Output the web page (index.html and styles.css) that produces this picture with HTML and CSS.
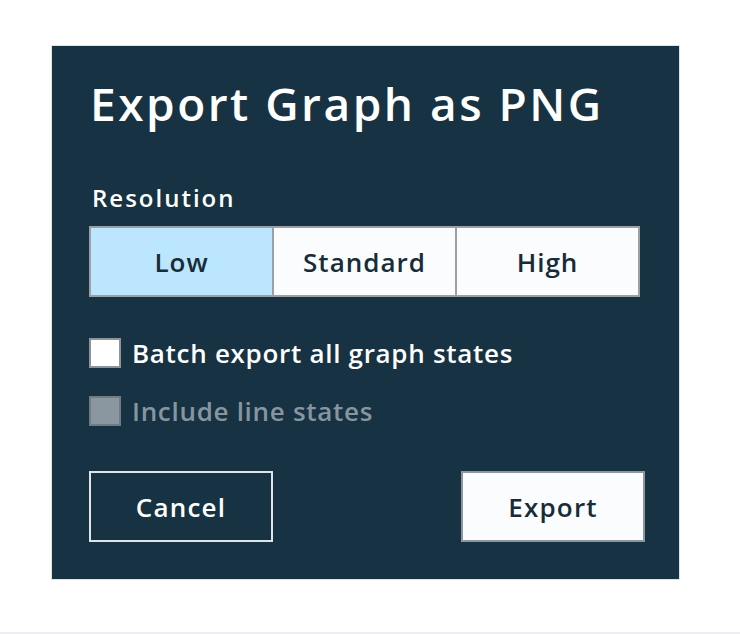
FILE: index.html
```html
<!DOCTYPE html>
<html lang="en">
<head>
<meta charset="utf-8">
<title>Export Graph as PNG</title>
<link rel="stylesheet" href="styles.css">
</head>
<body>
<div class="page">
  <div class="dialog">
    <h1 class="title">Export Graph as PNG</h1>
    <div class="label">Resolution</div>
    <div class="segmented">
      <button class="seg seg-active">Low</button>
      <button class="seg">Standard</button>
      <button class="seg">High</button>
    </div>
    <label class="check">
      <span class="box"></span>
      <span class="check-text">Batch export all graph states</span>
    </label>
    <label class="check check-disabled">
      <span class="box"></span>
      <span class="check-text">Include line states</span>
    </label>
    <div class="actions">
      <button class="btn btn-cancel">Cancel</button>
      <button class="btn btn-export">Export</button>
    </div>
  </div>
  <div class="footer-line"></div>
</div>
</body>
</html>
```
FILE: styles.css
```css
html, body {
  margin: 0;
  padding: 0;
  background: #ffffff;
}
body {
  font-family: "Open Sans", "Noto Sans", sans-serif;
  font-weight: 600;
}
.page {
  padding-top: 45px;
}
.dialog {
  box-sizing: border-box;
  margin-left: 51px;
  width: 629px;
  height: 535px;
  background: #173242;
  border: 1px solid #dde3e8;
  padding: 29px 0 0 37px;
  display: flex;
  flex-direction: column;
  align-items: flex-start;
}
.title {
  margin: 0;
  font-size: 46px;
  line-height: 56px;
  font-weight: 600;
  color: #ffffff;
  padding-left: 1px;
  letter-spacing: 2.5px;
}
.label {
  margin-top: 52px;
  font-size: 24px;
  line-height: 30px;
  color: #ffffff;
  padding-left: 3px;
  letter-spacing: 2px;
}
.segmented {
  margin-top: 13px;
  display: flex;
  width: 551px;
  height: 71px;
  box-sizing: border-box;
  border: 2px solid #9aa0a5;
  background: #9aa0a5;
  gap: 2px;
}
.seg {
  flex: 1;
  border: 0;
  margin: 0;
  padding: 0;
  background: #fbfcfe;
  font-family: inherit;
  font-weight: 600;
  font-size: 26px;
  letter-spacing: 1px;
  color: #172c39;
}
.seg-active {
  background: #bce6fd;
}
.check {
  display: flex;
  align-items: center;
  gap: 11px;
  font-size: 26px;
  line-height: 30px;
  letter-spacing: 0.7px;
  color: #ffffff;
}
.segmented + .check {
  margin-top: 41px;
}
.check + .check {
  margin-top: 28px;
}
.box {
  display: block;
  box-sizing: border-box;
  width: 32px;
  height: 30px;
  background: #ffffff;
  border: 2px solid #8c949b;
}
.check-disabled {
  color: #8795a1;
}
.check-disabled .box {
  background: #8a96a0;
  border-color: #6f7b85;
}
.actions {
  margin-top: 45px;
  width: 556px;
  display: flex;
  justify-content: space-between;
}
.btn {
  box-sizing: border-box;
  width: 184px;
  height: 71px;
  margin: 0;
  padding: 0;
  font-family: inherit;
  font-weight: 600;
  font-size: 26px;
  letter-spacing: 1.2px;
}
.btn-cancel {
  background: transparent;
  border: 2px solid #dfe4e8;
  color: #ffffff;
}
.btn-export {
  background: #fbfcfe;
  border: 2px solid #8f979e;
  color: #172c39;
}
.footer-line {
  margin-top: 52px;
  height: 2px;
  background: #eceef1;
}
```
